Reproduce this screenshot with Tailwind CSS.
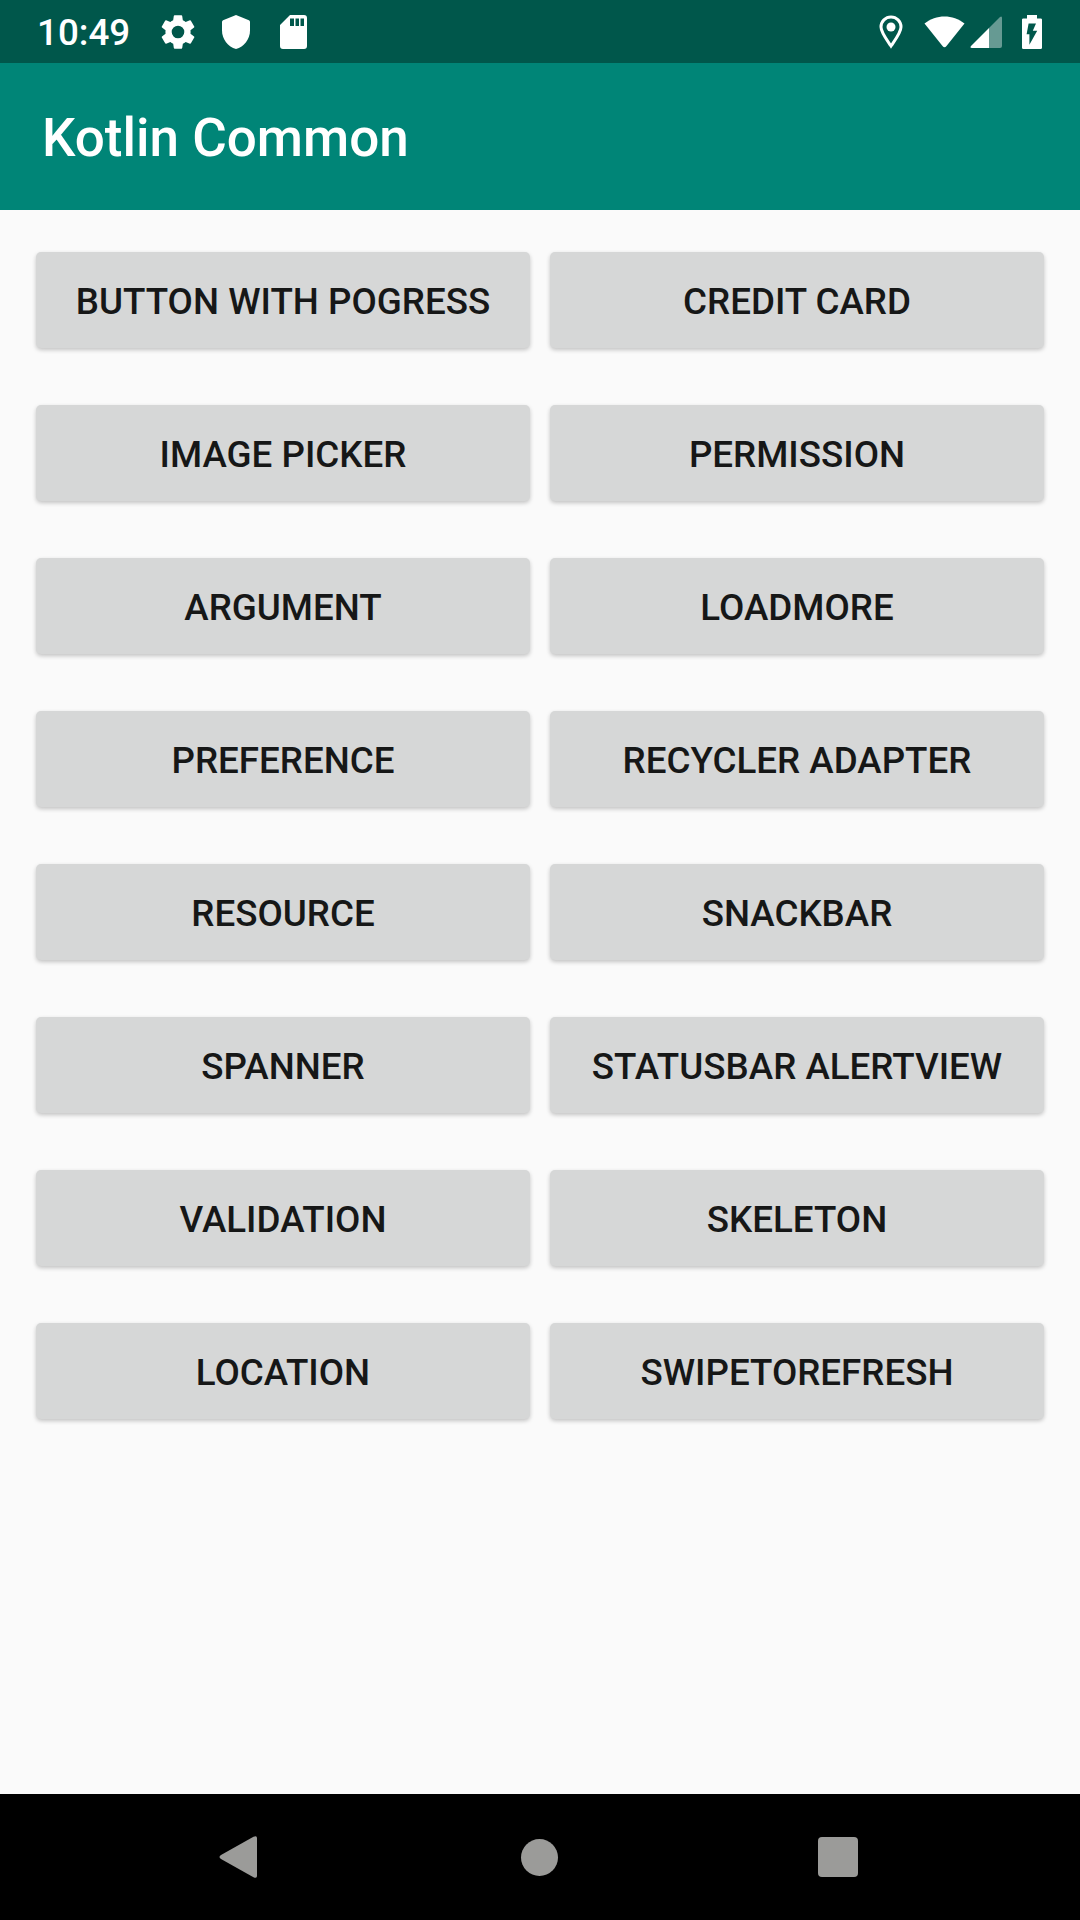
<!DOCTYPE html>
<html lang="en">
<head>
<meta charset="utf-8">
<title>Kotlin Common</title>
<script src="https://cdn.jsdelivr.net/npm/@tailwindcss/browser@4"></script>
</head>
<body class="flex h-[1920px] w-[1080px] flex-col overflow-hidden bg-[#fafafa] font-['Roboto',sans-serif]">
  <header class="flex h-[63px] shrink-0 items-center bg-[#00574b] text-white">
    <div class="ml-[37px] w-[119px] pt-[3px] text-[36.75px] leading-none font-medium">10:49</div>
    <svg class="ml-[1px] size-[42px]" viewBox="0 0 24 24" fill="currentColor"><path d="M19.14 12.94c.04-.3.06-.61.06-.94s-.02-.64-.07-.94l2.03-1.58a.49.49 0 0 0 .12-.61l-1.92-3.32a.49.49 0 0 0-.59-.22l-2.39.96a7 7 0 0 0-1.62-.94l-.36-2.54A.48.48 0 0 0 13.92 2.4h-3.84a.48.48 0 0 0-.48.41l-.36 2.54a7.2 7.2 0 0 0-1.62.94l-2.39-.96a.48.48 0 0 0-.59.22L2.74 8.87a.48.48 0 0 0 .12.61l2.03 1.58a6.2 6.2 0 0 0 0 1.88l-2.03 1.58a.49.49 0 0 0-.12.61l1.92 3.32c.12.22.37.29.59.22l2.39-.96c.5.38 1.03.7 1.62.94l.36 2.54c.05.24.24.41.48.41h3.84c.24 0 .44-.17.47-.41l.36-2.54a7 7 0 0 0 1.62-.94l2.39.96c.22.08.47 0 .59-.22l1.92-3.32a.48.48 0 0 0-.12-.61zM12 15.6a3.6 3.6 0 1 1 0-7.2 3.6 3.6 0 0 1 0 7.2z"/></svg>
    <svg class="ml-[23px] h-[34px] w-[28px]" viewBox="3 1 18 22" preserveAspectRatio="none" fill="currentColor"><path d="M12 1 3.700 4.400Q3 4.700 3 5.500V11c0 5.550 3.840 10.740 9 12 5.160-1.260 9-6.450 9-12V5.500q0-.8-.7-1.100z"/></svg>
    <svg class="ml-[30px] h-[34px] w-[27px]" viewBox="0 0 27 34" fill="currentColor"><path fill-rule="evenodd" d="M10 0h14q3 0 3 3v28q0 3-3 3H3q-3 0-3-3V10zM10 3.500V11h4V3.500zM15.500 3.500V11h3.500V3.500zM20.500 3.500V11H24V3.500z"/></svg>
    <svg class="ml-[572px] h-[34px] w-[24px]" viewBox="0 0 24 34" fill="none" stroke="currentColor"><path d="M12 31C8 25 2 17.500 2 12a10 10 0 0 1 20 0c0 5.500-6 13-10 19z" stroke-width="3"/><circle cx="12" cy="12" r="4.500" fill="currentColor" stroke="none"/></svg>
    <svg class="ml-[21px] h-[32px] w-[41px]" viewBox="0 0 41 32" fill="currentColor"><path d="M.5 7.500C12-2 29-2 40.500 7.500L22.500 30Q20.500 32.500 18.500 30z"/></svg>
    <svg class="ml-[5px] h-[32px] w-[33px]" viewBox="0 0 33 32" fill="currentColor"><path d="M19 12v20h11q2 0 2-2V2Q32-.5 30 1z" opacity=".4"/><path d="M19 12v20H2q-2.500 0-1-2z"/></svg>
    <svg class="ml-[19px] h-[34px] w-[20px]" viewBox="7 2 10 20" preserveAspectRatio="none" fill="currentColor"><path d="M16.300 4H14.500V2h-5v2H7.700Q7 4 7 4.700v16.600q0 .7.7.7h8.600q.7 0 .7-.7V4.700q0-.7-.7-.7zM10.700 19.500V13.300H9.300L10.300 7h3.700l-1.600 4.200H14.600z" fill-rule="evenodd"/></svg>
  </header>
  <div class="flex h-[147px] shrink-0 items-center bg-[#008577] pt-[4px] pl-[42px] text-[53px] font-medium text-white">Kotlin Common</div>
  <main class="grid grow auto-rows-[96px] grid-cols-2 gap-x-[20px] gap-y-[57px] px-[36px] pt-[42px] text-[36.75px] font-medium text-[#161717] *:rounded-[5px] *:bg-[#d6d7d7] *:pt-[3px] *:shadow-[0_2px_4px_rgba(0,0,0,0.22)]">
    <button>BUTTON WITH POGRESS</button>
    <button>CREDIT CARD</button>
    <button>IMAGE PICKER</button>
    <button>PERMISSION</button>
    <button>ARGUMENT</button>
    <button>LOADMORE</button>
    <button>PREFERENCE</button>
    <button>RECYCLER ADAPTER</button>
    <button>RESOURCE</button>
    <button>SNACKBAR</button>
    <button>SPANNER</button>
    <button>STATUSBAR ALERTVIEW</button>
    <button>VALIDATION</button>
    <button>SKELETON</button>
    <button>LOCATION</button>
    <button>SWIPETOREFRESH</button>
  </main>
  <nav class="flex h-[126px] shrink-0 items-center bg-black pl-[219px] text-[#9b9b99]">
    <svg class="h-[42px] w-[38px]" viewBox="0 0 38 42" fill="currentColor"><path d="M2 19 34.500.800Q38-.800 38 2v38q0 2.800-3.500 1.200L2 23q-3-2 0-4z"/></svg>
    <div class="ml-[264px] size-[37px] rounded-full bg-current"></div>
    <div class="ml-[260px] size-[40px] rounded-[4px] bg-current"></div>
  </nav>
</body>
</html>
